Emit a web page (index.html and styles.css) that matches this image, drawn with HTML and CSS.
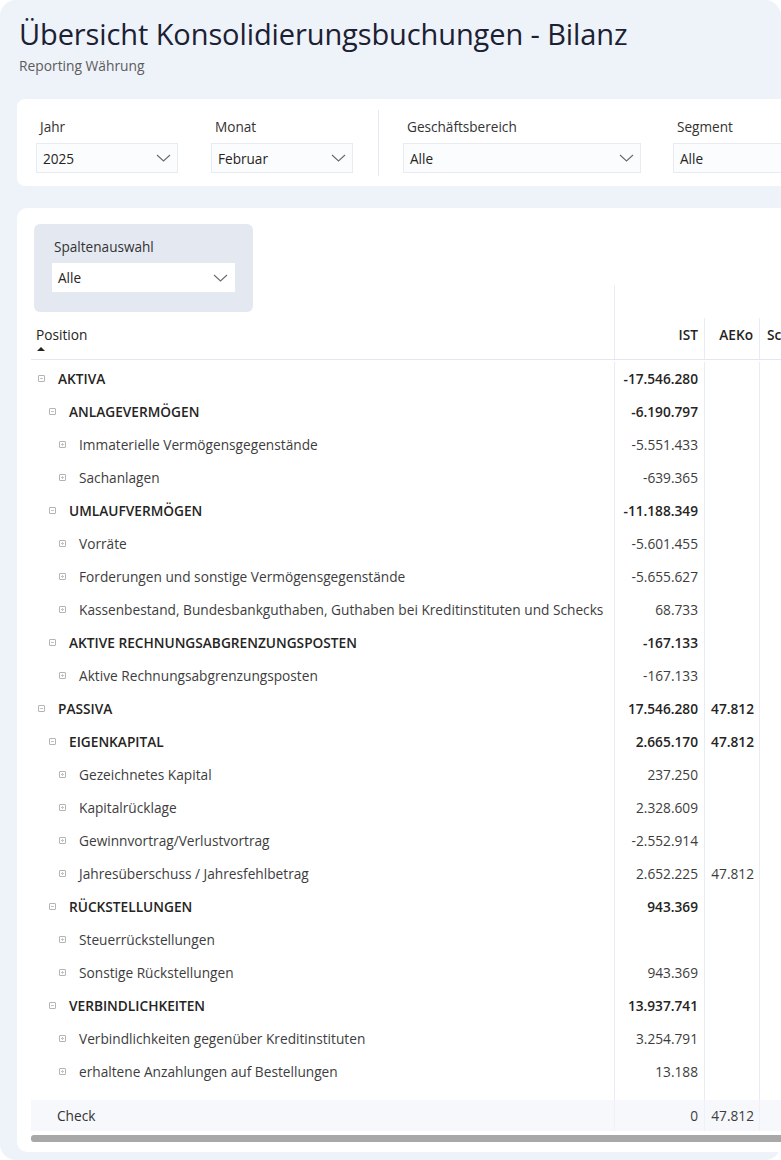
FILE: index.html
```html
<!DOCTYPE html>
<html lang="de">
<head>
    <meta charset="UTF-8">
    <meta name="viewport" content="width=device-width, initial-scale=1.0">
    <title>Übersicht Konsolidierungsbuchungen - Bilanz</title>
    <link rel="stylesheet" href="styles.css">
</head>
<body>
    <div class="frame">
        <div class="header">
            <h1>Übersicht Konsolidierungsbuchungen - Bilanz</h1>
            <div class="subtitle">Reporting Währung</div>
        </div>

        <div class="filter-card">
            <div class="filter f-jahr">
                <div class="f-label">Jahr</div>
                <div class="dropdown"><span>2025</span><svg width="15" height="8" viewBox="0 0 15 8"><polyline points="1,1 7.5,7 14,1" fill="none" stroke="#6b6b6b" stroke-width="1.1"/></svg></div>
            </div>
            <div class="filter f-monat">
                <div class="f-label">Monat</div>
                <div class="dropdown"><span>Februar</span><svg width="15" height="8" viewBox="0 0 15 8"><polyline points="1,1 7.5,7 14,1" fill="none" stroke="#6b6b6b" stroke-width="1.1"/></svg></div>
            </div>
            <div class="f-sep"></div>
            <div class="filter f-wide">
                <div class="f-label">Geschäftsbereich</div>
                <div class="dropdown"><span>Alle</span><svg width="15" height="8" viewBox="0 0 15 8"><polyline points="1,1 7.5,7 14,1" fill="none" stroke="#6b6b6b" stroke-width="1.1"/></svg></div>
            </div>
            <div class="filter f-segment">
                <div class="f-label">Segment</div>
                <div class="dropdown"><span>Alle</span><svg width="15" height="8" viewBox="0 0 15 8"><polyline points="1,1 7.5,7 14,1" fill="none" stroke="#6b6b6b" stroke-width="1.1"/></svg></div>
            </div>
        </div>

        <div class="table-card">
            <div class="col-select">
                <div class="f-label">Spaltenauswahl</div>
                <div class="dropdown white"><span>Alle</span><svg width="15" height="8" viewBox="0 0 15 8"><polyline points="1,1 7.5,7 14,1" fill="none" stroke="#6b6b6b" stroke-width="1.1"/></svg></div>
            </div>

            <div class="matrix">
                <div class="head">
                    <div class="h-pos">Position<span class="sort"></span></div>
                    <div class="h-group"></div>
                    <div class="h-col">IST</div>
                    <div class="h-col">AEKo</div>
                    <div class="h-col h-left">Sc</div>
                </div>

                <div class="body" id="body"></div>

                <div class="row total">
                    <div class="c-pos"><span class="label">Check</span></div>
                    <div class="c-val">0</div>
                    <div class="c-val">47.812</div>
                    <div class="c-val"></div>
                </div>
                <div class="scrollbar"></div>
            </div>
        </div>
    </div>

    <script>
        var rows = [
            [0, 'AKTIVA', '-17.546.280', ''],
            [1, 'ANLAGEVERMÖGEN', '-6.190.797', ''],
            [2, 'Immaterielle Vermögensgegenstände', '-5.551.433', ''],
            [2, 'Sachanlagen', '-639.365', ''],
            [1, 'UMLAUFVERMÖGEN', '-11.188.349', ''],
            [2, 'Vorräte', '-5.601.455', ''],
            [2, 'Forderungen und sonstige Vermögensgegenstände', '-5.655.627', ''],
            [2, 'Kassenbestand, Bundesbankguthaben, Guthaben bei Kreditinstituten und Schecks', '68.733', ''],
            [1, 'AKTIVE RECHNUNGSABGRENZUNGSPOSTEN', '-167.133', ''],
            [2, 'Aktive Rechnungsabgrenzungsposten', '-167.133', ''],
            [0, 'PASSIVA', '17.546.280', '47.812'],
            [1, 'EIGENKAPITAL', '2.665.170', '47.812'],
            [2, 'Gezeichnetes Kapital', '237.250', ''],
            [2, 'Kapitalrücklage', '2.328.609', ''],
            [2, 'Gewinnvortrag/Verlustvortrag', '-2.552.914', ''],
            [2, 'Jahresüberschuss / Jahresfehlbetrag', '2.652.225', '47.812'],
            [1, 'RÜCKSTELLUNGEN', '943.369', ''],
            [2, 'Steuerrückstellungen', '', ''],
            [2, 'Sonstige Rückstellungen', '943.369', ''],
            [1, 'VERBINDLICHKEITEN', '13.937.741', ''],
            [2, 'Verbindlichkeiten gegenüber Kreditinstituten', '3.254.791', ''],
            [2, 'erhaltene Anzahlungen auf Bestellungen', '13.188', ''],
            [2, '', '', '']
        ];

        var body = document.getElementById('body');
        rows.forEach(function (r) {
            var row = document.createElement('div');
            row.className = 'row lvl' + r[0];
            var icon = r[0] < 2 ? 'minus' : 'plus';
            row.innerHTML =
                '<div class="c-pos"><span class="tog ' + icon + '"></span><span class="label">' + r[1] + '</span></div>' +
                '<div class="c-val">' + r[2] + '</div>' +
                '<div class="c-val">' + r[3] + '</div>' +
                '<div class="c-val"></div>';
            body.appendChild(row);
        });
    </script>
</body>
</html>
```

FILE: styles.css
```css
body { margin: 0; background: #fff; font-family: "Open Sans", "Noto Sans", sans-serif; color: #252423; }
.frame { width: 781px; height: 1160px; background: #eef2f9; border-radius: 16px; overflow: hidden; }

.header { padding: 16px 0 0 19px; }
.header h1 { margin: 0; font-size: 29px; line-height: 36px; font-weight: 400; color: #1b2133; letter-spacing: -0.1px; }
.subtitle { margin-top: 5px; font-size: 13.8px; line-height: 18px; color: #5c5c5c; }

.filter-card { margin: 24px 0 0 17px; width: 900px; height: 66px; padding: 11px 0 10px 19px; background: #fff; border-radius: 8px; display: flex; }
.filter { padding-top: 8px; flex: none; }
.f-jahr { width: 142px; margin-right: 33px; }
.f-monat { width: 142px; margin-right: 25px; }
.f-sep { width: 1px; flex: none; background: #e4e8f0; margin-right: 24px; }
.f-wide { width: 238px; margin-right: 32px; }
.f-segment { width: 260px; }
.f-label { font-size: 13.6px; line-height: 18px; color: #333; padding-left: 4px; margin-bottom: 7px; }
.dropdown { height: 30px; box-sizing: border-box; border: 1px solid #e8ebf1; background: #fbfcfd; display: flex; align-items: center; justify-content: space-between; padding: 0 6px 0 6px; font-size: 13.6px; color: #252423; }
.dropdown svg { flex: none; }

.table-card { position: relative; margin: 22px 0 0 17px; width: 900px; height: 944px; box-sizing: border-box; padding: 77px 0 0 14px; background: #fff; border-radius: 10px; }
.col-select { position: absolute; top: 16px; left: 17px; width: 219px; height: 88px; box-sizing: border-box; padding: 14px 18px 0 18px; background: #e4e9f1; border-radius: 6px; z-index: 2; }
.col-select .f-label { padding-left: 2px; }
.dropdown.white { height: 29px; background: #fff; border-color: #fff; padding-left: 5px; }

.head { display: grid; grid-template-columns: 583px 90px 55px 90px; grid-template-rows: 33px 41px; border-bottom: 1px solid #e1e6f1; font-size: 13.7px; }
.h-pos { grid-row: 1 / 3; display: flex; flex-direction: column; justify-content: flex-end; padding: 0 0 8px 5px; line-height: 18px; color: #252423; }
.sort { width: 0; height: 0; margin: 3px 0 0 1px; border-left: 4px solid transparent; border-right: 4px solid transparent; border-bottom: 4px solid #252423; }
.h-group { grid-column: 2 / 5; border-left: 1px solid #e8ecf4; }
.h-col { border-left: 1px solid #e8ecf4; padding: 8px 6px 0 0; text-align: right; font-weight: 600; line-height: 18px; }
.h-left { text-align: left; padding-left: 7px; }

.body { height: 740px; overflow: hidden; padding-top: 2px; box-sizing: border-box; }
.row { display: grid; grid-template-columns: 583px 90px 55px 90px; height: 33px; font-size: 13.7px; }
.c-pos { display: flex; align-items: center; padding-left: 5px; white-space: nowrap; color: #3d3d3d; }
.c-val { display: flex; align-items: center; justify-content: flex-end; padding-right: 6px; border-left: 1px solid #e8ecf4; color: #3d3d3d; }
.row .c-val:nth-child(3) { padding-right: 5px; }
.lvl0 .c-pos, .lvl1 .c-pos, .lvl0 .c-val, .lvl1 .c-val { font-weight: 600; color: #252423; }
.lvl1 .c-pos { padding-left: 16px; }
.lvl2 .c-pos { padding-left: 26px; }

.tog { position: relative; width: 7px; height: 7px; box-sizing: border-box; border: 1px solid #b4b4b4; border-radius: 1px; margin: 0 13px 0 2px; flex: none; }
.tog::before { content: ""; position: absolute; left: 1px; top: 2px; width: 3px; height: 1px; background: #c4c4c4; }
.tog.plus::after { content: ""; position: absolute; left: 2px; top: 1px; width: 1px; height: 3px; background: #c4c4c4; }

.total { background: #f6f8fc; height: 31px; }
.total .c-pos { padding-left: 26px; color: #333; }
.total .c-val { border-left-color: #eef1f7; }

.scrollbar { margin-top: 4px; height: 7px; background: #a8a8a8; border-radius: 3px; }
```
